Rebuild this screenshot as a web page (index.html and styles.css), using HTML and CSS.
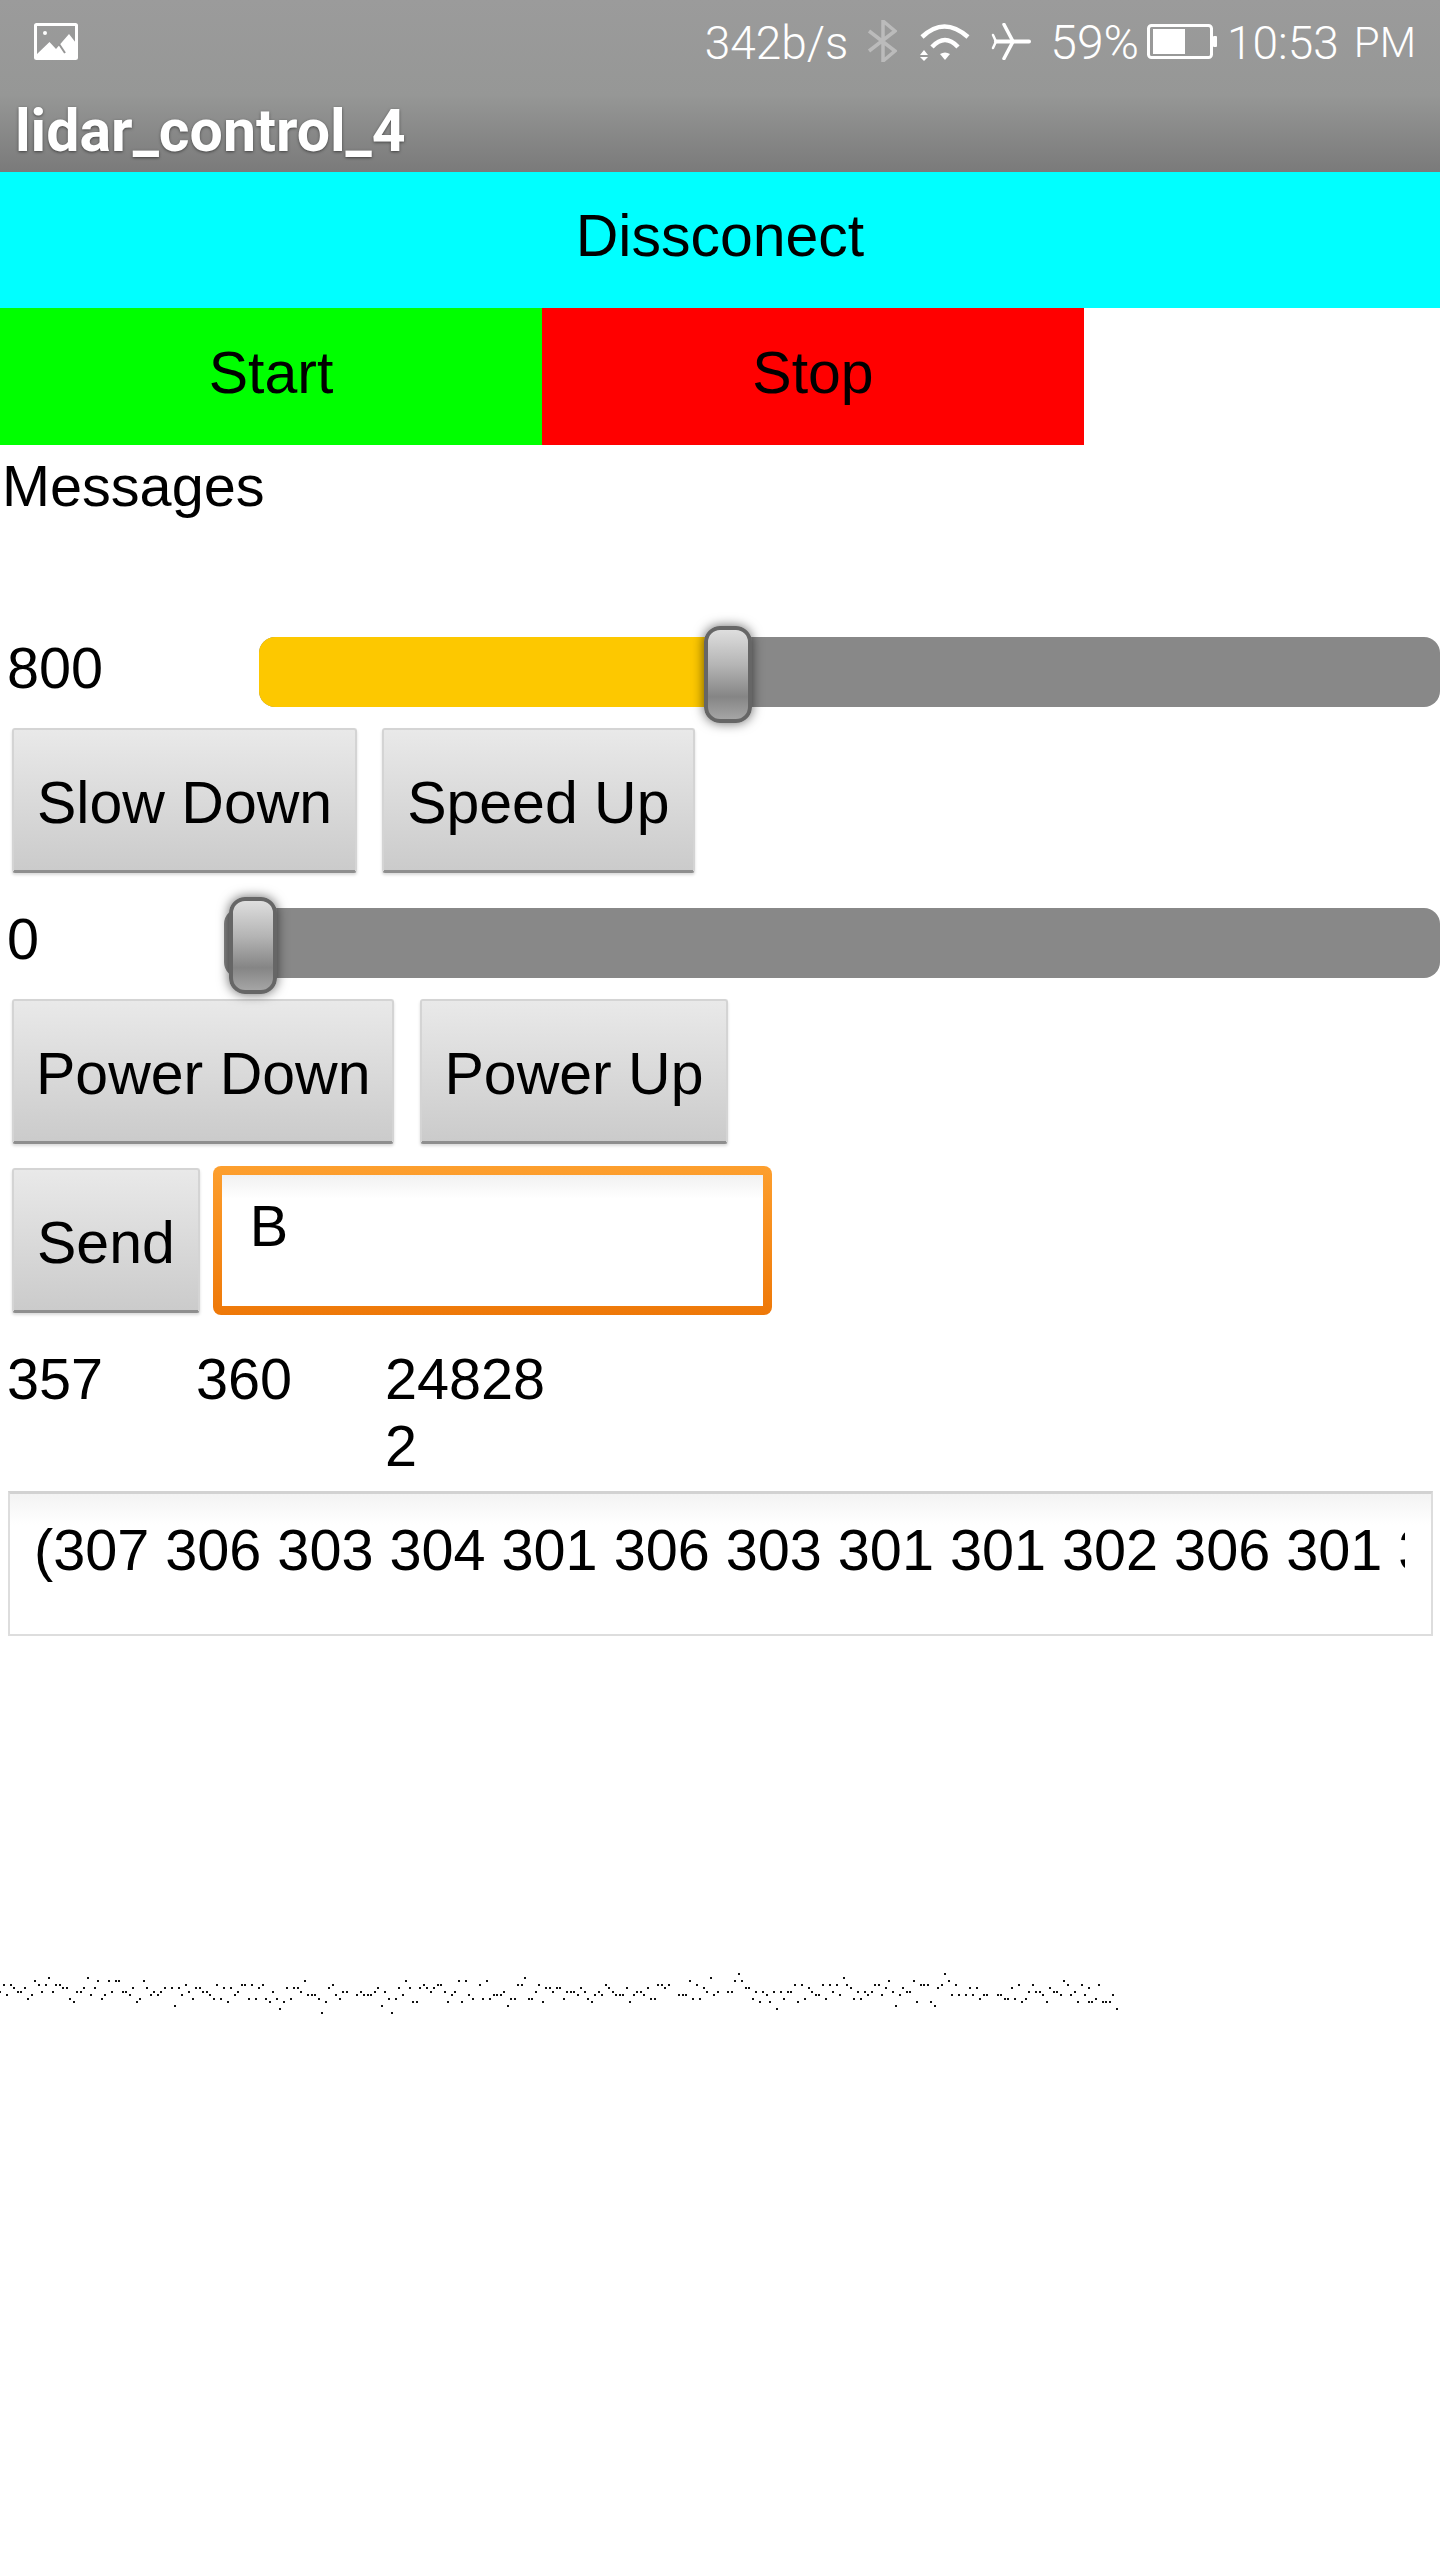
FILE: index.html
```html
<!DOCTYPE html>
<html lang="en">
<head>
<meta charset="UTF-8">
<title>lidar_control_4</title>
<link rel="stylesheet" href="styles.css">
</head>
<body>
<div class="topbar">
    <div class="statusbar">
        <svg class="icon-image" width="44" height="37" viewBox="0 0 44 37">
            <rect x="1.5" y="1.5" width="41" height="34" rx="1" fill="none" stroke="#fff" stroke-width="3"/>
            <circle cx="11" cy="10" r="2" fill="#fff"/>
            <path d="M3 31 L15.5 19 L22 26 L35 11 L42 20 V35 H3 Z" fill="#fff"/>
            <path d="M25 21 L31 30" stroke="#959595" stroke-width="2" fill="none"/>
        </svg>
        <div class="status-right">
            <span class="speed">342b/s</span>
            <svg class="icon-bt" width="30" height="42" viewBox="0 0 30 42">
                <path d="M2 11 L28 31 L16 41 V1 L28 11 L2 31" fill="none" stroke="#bbb" stroke-width="3.5"/>
            </svg>
            <svg class="icon-wifi" width="50" height="37" viewBox="0 0 50 37">
                <path d="M2 13 Q24 -8 48 13" fill="none" stroke="#fff" stroke-width="4.5"/>
                <path d="M12 23 Q25 9 38 23" fill="none" stroke="#fff" stroke-width="4.5"/>
                <path d="M20 30 Q25 27 30 30 L25 36 Z" fill="#fff"/>
                <path d="M4 26 L8 31 H0 Z M0 33 H8 L4 37 Z" fill="#fff"/>
            </svg>
            <svg class="icon-plane" width="40" height="37" viewBox="0 0 40 37">
                <path d="M5 18.5 H38" stroke="#fff" stroke-width="4" stroke-linecap="round"/>
                <path d="M13 1.5 L22 18.5 L13 35.5" fill="none" stroke="#fff" stroke-width="3.5" stroke-linecap="round"/>
                <path d="M2 12 L5 18.5 L2 25" fill="none" stroke="#fff" stroke-width="2.5" stroke-linecap="round"/>
            </svg>
            <span class="percent">59%</span>
            <svg class="icon-battery" width="70" height="35" viewBox="0 0 70 35">
                <rect x="1.5" y="1.5" width="63" height="32" rx="3" fill="none" stroke="#fff" stroke-width="3"/>
                <rect x="6" y="5" width="32" height="25" fill="#fff"/>
                <rect x="66" y="12" width="4" height="11" rx="1" fill="#fff"/>
            </svg>
            <span class="clock">10:53</span>
            <span class="ampm">PM</span>
        </div>
    </div>
    <div class="apptitle">lidar_control_4</div>
</div>

<div class="block-btn connect">Dissconect</div>
<div class="startstop">
    <div class="block-btn start">Start</div>
    <div class="block-btn stop">Stop</div>
</div>
<div class="messages">Messages</div>

<div class="slider-row speed-row">
    <div class="slider-label">800</div>
    <div class="track">
        <div class="fill" style="width: 466px"></div>
        <div class="thumb" style="left: 445px"></div>
    </div>
</div>
<div class="btn-row first">
    <div class="btn">Slow Down</div>
    <div class="btn">Speed Up</div>
</div>

<div class="slider-row power-row">
    <div class="slider-label">0</div>
    <div class="track">
        <div class="thumb" style="left: 5px"></div>
    </div>
</div>
<div class="btn-row second">
    <div class="btn">Power Down</div>
    <div class="btn">Power Up</div>
</div>

<div class="btn-row send-row">
    <div class="btn">Send</div>
    <div class="input-box"><div class="input-inner">B</div></div>
</div>

<div class="readings">
    <div class="reading">357</div>
    <div class="reading">360</div>
    <div class="reading">248282</div>
</div>

<div class="datafield"><div class="datatext">(307 306 303 304 301 306 303 301 301 302 306 301 303 304 301</div></div>

<canvas id="plot" width="1440" height="100"></canvas>
<script src="plot.js"></script>
</body>
</html>
```

FILE: styles.css
```css
body {
    margin: 0;
    background: #fff;
    color: #000;
    font-family: 'Liberation Sans', Arial, sans-serif;
    font-size: 57.6px;
}

/* top of the phone screen */
.topbar {
    height: 172px;
    background: linear-gradient(#9b9b9b 0%, #969796 55%, #7a7a7a 100%);
    color: #fff;
}
.statusbar {
    display: flex;
    align-items: flex-start;
    justify-content: space-between;
    height: 99px;
    padding: 23px 24px 0 34px;
    box-sizing: border-box;
}
.status-right {
    display: flex;
    align-items: flex-start;
}
.speed, .percent, .clock, .ampm {
    font-family: Roboto, 'Liberation Sans', sans-serif;
    font-weight: 300;
    font-size: 46px;
    line-height: 40px;
}
.icon-bt { margin: -3px 0 0 19px; }
.icon-wifi { margin: 1px 0 0 23px; }
.icon-plane { margin-left: 21px; }
.percent { margin-left: 19px; font-size: 48px; }
.icon-battery { margin: 1px 0 0 8px; }
.clock { margin-left: 10px; }
.ampm { margin-left: 15px; font-size: 42px; }
.apptitle {
    padding-left: 15px;
    font-family: Roboto, sans-serif;
    font-weight: 700;
    font-size: 59px;
    line-height: 64px;
    text-shadow: 0 1px 3px rgba(0,0,0,0.5);
}

.block-btn {
    display: flex;
    align-items: center;
    justify-content: center;
    height: 136px;
    padding-bottom: 8px;
    box-sizing: border-box;
    font-size: 59px;
}
.connect { background: #0ff; }
.startstop { display: flex; }
.start, .stop { width: 542px; height: 137px; }
.start { background: #0f0; }
.stop { background: #f00; }

.messages {
    height: 177px;
    padding-left: 2px;
    line-height: 82px;
}

.slider-row {
    display: flex;
    align-items: center;
    height: 100px;
}
.slider-label {
    padding: 0 0 8px 7px;
    box-sizing: border-box;
}
.speed-row .slider-label { width: 259px; }
.power-row { margin-top: 20px; }
.power-row .slider-label { width: 224px; }
.track {
    position: relative;
    flex: 1;
    height: 70px;
    background: #888;
    border-radius: 16px;
}
.fill {
    height: 100%;
    background: #fdc800;
    border-radius: 16px 0 0 16px;
}
.thumb {
    position: absolute;
    top: -11px;
    width: 48px;
    height: 97px;
    box-sizing: border-box;
    border: 4px solid #666;
    border-radius: 16px;
    background: linear-gradient(#dedede 0%, #b4b4b4 40%, #858585 75%, #a5a5a5 100%);
    box-shadow: 0 0 12px rgba(0,0,0,0.6);
}

.btn-row {
    display: flex;
    align-items: flex-start;
    gap: 25px;
    padding-left: 12px;
}
.btn-row.first { margin-top: 6px; }
.btn-row.second { margin-top: 6px; gap: 26px; }
.btn-row.send-row { margin-top: 22px; gap: 13px; }
.btn {
    display: flex;
    align-items: center;
    height: 145px;
    padding: 5px 23px 0;
    box-sizing: border-box;
    font-size: 59px;
    background: linear-gradient(#e9e9e9, #cbcbcb);
    border: 2px solid #d4d4d4;
    border-bottom: 3px solid #8e8e8e;
    border-radius: 3px;
    box-shadow: 0 2px 3px rgba(0,0,0,0.15);
}
.second .btn { padding: 5px 22px 0; }
.send-row .btn { margin-top: 2px; }

.input-box {
    width: 559px;
    height: 149px;
    padding: 9px;
    box-sizing: border-box;
    background: linear-gradient(#fd9f2e, #ee7808);
    border-radius: 8px;
}
.input-inner {
    height: 100%;
    padding: 18px 0 0 28px;
    box-sizing: border-box;
    background: linear-gradient(#f1f1f1, #fff 18%);
    line-height: 66px;
}

.readings {
    display: flex;
    margin-top: 31px;
    padding-left: 7px;
    line-height: 67px;
}
.reading {
    width: 189px;
    word-break: break-all;
}

.datafield {
    margin: 11px 7px 0 8px;
    height: 145px;
    padding: 23px 26px 0 24px;
    box-sizing: border-box;
    border: 2px solid #ddd;
    border-top: 3px solid #d2d2d2;
    background: linear-gradient(#f3f3f3, #fff 22%);
}
.datatext {
    overflow: hidden;
    white-space: nowrap;
    line-height: 66px;
}

#plot {
    display: block;
    margin-top: 325px;
}
```

FILE: plot.js
```js
// lidar samples, one block per 80 columns. key = row, value = columns with a dot
const CELL = 3.5;
const TOP = 16.7; // y of row 0 inside the canvas
const SAMPLES = [
    {
        0: [14, 25],
        1: [10, 28, 31, 33, 34, 41],
        2: [1, 3, 11, 13, 16, 17, 53, 62, 69, 70, 72, 75],
        3: [4, 7, 18, 19, 24, 27, 38, 42, 47, 49, 51, 56, 57, 64, 66, 74],
        4: [0, 5, 6, 12, 15, 22, 23, 32, 35, 36, 44, 46, 54, 58, 59, 68, 78],
        5: [2, 9, 26, 30, 37, 43, 45, 52, 60, 67],
        6: [8, 20, 29, 40, 55, 61, 63, 71, 73, 76, 79],
        7: [21, 39, 65, 77],
        8: [50]
    },
    {
        0: [70],
        1: [7, 36, 51, 53, 59],
        2: [15, 41, 45, 46, 57, 68, 69, 74],
        3: [2, 4, 5, 14, 28, 34, 37, 40, 42, 44, 76, 77, 79],
        4: [6, 18, 19, 23, 27, 30, 43, 47, 50, 64, 73, 78],
        5: [8, 9, 10, 16, 22, 24, 25, 26, 35, 49, 54, 61, 62, 63],
        6: [3, 11, 17, 31, 33, 55, 58, 60, 66, 67, 71, 72],
        7: [1, 13, 38, 39, 48, 52, 75],
        8: [29, 65],
        9: [0],
        10: [12, 32]
    },
    {
        "-1": [51],
        0: [43],
        1: [37, 50, 52],
        2: [13, 28, 29, 31, 39, 67, 69, 75, 77, 79],
        3: [0, 6, 14, 19, 25, 30, 41, 53, 54, 71],
        4: [2, 3, 4, 7, 11, 15, 22, 23, 42, 45, 48, 49, 56, 58, 61, 63, 65, 66, 72, 78],
        5: [5, 10, 12, 16, 17, 18, 21, 24, 34, 35, 36, 44, 59, 73, 74],
        6: [1, 8, 26, 27, 38, 40, 55, 64, 70, 76],
        7: [9, 20, 57, 60, 68],
        9: [62]
    },
    {
        "-1": [30],
        0: [1],
        1: [14, 21, 31, 64],
        2: [2, 10, 11, 23, 24, 25, 29, 33, 51, 55, 65, 69, 74],
        3: [3, 13, 18, 28, 37, 39, 49, 60, 71],
        4: [5, 7, 9, 15, 19, 20, 54, 56, 57, 61, 62, 67],
        5: [0, 8, 12, 17, 32, 34, 36, 38, 41, 42, 45, 46, 58, 63, 66, 70, 78],
        6: [4, 6, 40, 47, 48, 50, 53, 73],
        7: [22, 26, 52, 59, 68, 71, 72, 75, 76, 77],
        8: [16, 27],
        9: [79]
    }
];

const ctx = document.getElementById('plot').getContext('2d');
ctx.fillStyle = '#111';
SAMPLES.forEach(function(block, b) {
    Object.keys(block).forEach(function(row) {
        block[row].forEach(function(col) {
            const x = (b * 80 + col) * CELL;
            const y = TOP + Number(row) * CELL;
            ctx.fillRect(Math.round(x - 1), Math.round(y - 1), 2, 2);
        });
    });
});
```
